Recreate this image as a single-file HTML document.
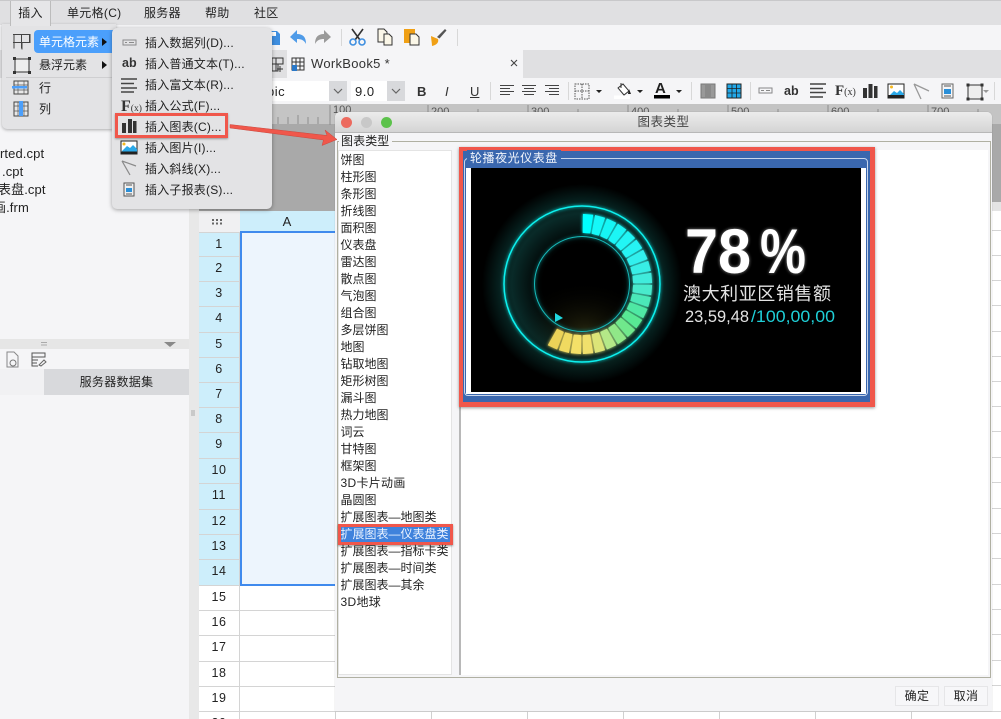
<!DOCTYPE html>
<html lang="zh"><head><meta charset="utf-8"><title>图表类型</title>
<style>
*{box-sizing:border-box}
html{margin:0;padding:0;width:1001px;height:719px;overflow:hidden}
body{margin:0;padding:0;width:1001px;height:719px;overflow:hidden;position:relative;background:#f5f5f7;font:12px/17px "Liberation Sans","Noto Sans CJK SC",sans-serif;color:#222}
.a,.t{position:absolute}
.t{white-space:nowrap}
.m{font-size:12px;line-height:18px;letter-spacing:.2px;color:#222}
.r{position:absolute;left:199px;width:40px;height:27px;border-top:1px solid #d4d4d4;text-align:center;font-size:12.5px;line-height:23px;letter-spacing:.6px;color:#222;background:#cdeefb}
.w{background:#fff}
.l{position:absolute;left:335.5px;width:120px;height:17px;padding-left:5px;line-height:17px;font-size:12px;color:#222;white-space:nowrap}
svg{position:absolute;overflow:visible}
</style></head><body>

<!-- top chrome -->
<div class="a" style="left:0;top:0;width:1001px;height:25px;background:#e0e0e2;border-top:1px solid #c8c8ca"></div>
<div class="a" style="left:0;top:25px;width:1001px;height:25px;background:#f5f5f7"></div>
<div class="a" style="left:0;top:50px;width:1001px;height:28px;background:#e0e0e2"></div>
<div class="a" style="left:287px;top:50px;width:236px;height:28px;background:#f5f5f7"></div>
<div class="a" style="left:0;top:78px;width:1001px;height:26px;background:#f5f5f7"></div>
<div class="t" style="left:67px;top:5px;font-size:12px;letter-spacing:.3px">单元格(C)</div>
<div class="t" style="left:144px;top:5px;letter-spacing:.3px">服务器</div>
<div class="t" style="left:205px;top:5px;letter-spacing:.3px">帮助</div>
<div class="t" style="left:254px;top:5px;letter-spacing:.3px">社区</div>

<!-- toolbar icons row 1 -->
<svg style="left:0;top:0" width="1001" height="105" viewBox="0 0 1001 105">
<path d="M268 31h9l3 3v11h-12z" fill="#3f8fe0"/><rect x="271" y="32" width="5" height="4" fill="#fff"/>
<path d="M290 37l7-7v4c6 0 9 3 9 10c-2-4-5-5-9-5v4z" fill="#4f9be8"/>
<path d="M331 37l-7-7v4c-6 0-9 3-9 10c2-4 5-5 9-5v4z" fill="#9a9a9a"/>
<rect x="341" y="29" width="1" height="17" fill="#d8d8d8"/>
<path d="M352 29l8 11M363 29l-8 11" stroke="#333" stroke-width="1.6" fill="none"/>
<circle cx="353" cy="42" r="3" fill="none" stroke="#3f8fe0" stroke-width="1.6"/><circle cx="362" cy="42" r="3" fill="none" stroke="#3f8fe0" stroke-width="1.6"/>
<path d="M378 29h6l3 3v10h-9z" fill="#fbf7e8" stroke="#333"/><path d="M384 34h5l3 3v8h-8z" fill="#fbf7e8" stroke="#333"/>
<rect x="404" y="29" width="11" height="14" fill="#f0a015"/><path d="M410 34h6l3 3v8h-9z" fill="#fbf7e8" stroke="#333"/>
<path d="M431 36l7 3c1 3-1 6-6 7c0-3-1-7-1-10z" fill="#f0a015"/><path d="M437 37l8-8 1.500 1.500-7 8z" fill="#555"/>
<rect x="457" y="29" width="1" height="17" fill="#d8d8d8"/>

<!-- tab icons -->
<path d="M272 58h11v6h-5v7h-6zM276 58v13M272 64h6M280 66v6M277 69h6" fill="none" stroke="#333"/>
<path d="M292 58h12v12h-12zM296 58v12M300 58v12M292 62h12M292 66h12" fill="none" stroke="#333"/><rect x="292" y="65" width="5" height="6" fill="#2a78c8"/>
<path d="M511 60l6 6M517 60l-6 6" stroke="#444" stroke-width="1.100"/>

<!-- format bar -->
<rect x="490" y="82" width="1" height="18" fill="#d8d8d8"/><rect x="568" y="82" width="1" height="18" fill="#d8d8d8"/><rect x="691" y="82" width="1" height="18" fill="#d8d8d8"/><rect x="750" y="82" width="1" height="18" fill="#d8d8d8"/><rect x="994" y="82" width="1" height="18" fill="#d8d8d8"/>
<path d="M500 85.500h14M500 88.500h10M500 91.500h14M500 94.500h10" stroke="#444"/><path d="M522 85.500h14M524 88.500h10M522 91.500h14M524 94.500h10" stroke="#444"/><path d="M545 85.500h14M549 88.500h10M545 91.500h14M549 94.500h10" stroke="#444"/>
<rect x="575" y="84" width="14" height="15" fill="none" stroke="#555" stroke-dasharray="1.500 1"/><path d="M582 84v15M575 91h14" stroke="#555" stroke-dasharray="1.500 1"/>
<path d="M596 90h6l-3 3z M637 90h6l-3 3z M676 90h6l-3 3z" fill="#222"/>
<path d="M618 88l5-4 6 7-5 4z" fill="#fff" stroke="#333"/><path d="M621 83v5" stroke="#333"/><path d="M629 89l2 5h-3z" fill="#222"/><rect x="614" y="95.500" width="16" height="3.500" fill="#fff"/>
<rect x="654" y="95" width="16" height="3.500" fill="#000"/>
<rect x="701" y="84" width="14" height="14" fill="#999" stroke="#777"/><rect x="705" y="85" width="6" height="12" fill="#8a8a8a"/>
<rect x="727" y="84" width="14" height="14" fill="#22a8e8" stroke="#222"/><path d="M727 88.500h14M727 93h14M732 84v14M736.500 84v14" stroke="#222" stroke-width=".8"/>
<rect x="759" y="88" width="13" height="5" fill="none" stroke="#888"/><path d="M761 90.500h3M766 90.500h4" stroke="#888"/>
<path d="M810 84h16M810 88.500h13M810 92.500h16M810 97h13" stroke="#444" stroke-width="1.500"/>
<path d="M863 88h4v10h-4zM868.500 84h4v14h-4zM874 86h3.500v12h-3.500z" fill="#333"/>
<rect x="888" y="84" width="16" height="14" fill="#fff" stroke="#222"/><path d="M889 96l5-5 3 2 3-3 4 4v2h-15z" fill="#2aa8e8"/><circle cx="891.500" cy="87" r="1.500" fill="#f5b820"/><rect x="888" y="95" width="16" height="3" fill="#222"/>
<path d="M914 84l15 7M914 84l7 15" stroke="#999" stroke-width="1.300" fill="none"/>
<rect x="942" y="84" width="11" height="14" fill="#f5f5f7" stroke="#666"/><rect x="944" y="89" width="7" height="5" fill="#2a8fd8"/><path d="M944 86h7M944 96h7" stroke="#555"/>
<rect x="968" y="85" width="14" height="14" fill="#eee" stroke="#333"/><rect x="966.500" y="83.500" width="3" height="3" fill="#333"/><rect x="980.500" y="83.500" width="3" height="3" fill="#333"/><rect x="966.500" y="97.500" width="3" height="3" fill="#333"/><rect x="980.500" y="97.500" width="3" height="3" fill="#333"/>
<path d="M983 90h6l-3 3z" fill="#999"/>
</svg>
<div class="t" style="left:311px;top:54px;font-size:13px;line-height:19px;letter-spacing:.3px;color:#333">WorkBook5 *</div>

<!-- format controls -->
<div class="a" style="left:240px;top:81px;width:91px;height:20px;background:#fff"></div>
<div class="a" style="left:329px;top:81px;width:18px;height:20px;background:#d8d9dc"></div>
<div class="a" style="left:351px;top:81px;width:37px;height:20px;background:#fff"></div>
<div class="a" style="left:387px;top:81px;width:18px;height:20px;background:#d8d9dc"></div>
<svg style="left:0;top:0" width="420" height="105"><path d="M334 89l4 4 4-4M392 89l4 4 4-4" fill="none" stroke="#666" stroke-width="1.200"/></svg>
<div class="t" style="left:267px;top:83px;font-size:13px;letter-spacing:.5px">bic</div>
<div class="t" style="left:355px;top:83px;font-size:13px;letter-spacing:.5px">9.0</div>
<div class="t" style="left:417px;top:83px;font-size:13px;font-weight:bold;color:#333">B</div>
<div class="t" style="left:445px;top:83px;font-size:13px;font-style:italic;color:#333">I</div>
<div class="t" style="left:470px;top:83px;font-size:13px;text-decoration:underline;color:#333">U</div>
<div class="t" style="left:655px;top:80px;font-size:15px;font-weight:bold;color:#222">A</div>
<div class="t" style="left:784px;top:83px;font-size:12.500px;font-weight:bold;color:#333">ab</div>
<div class="t" style="left:835px;top:83px;font-size:15px;font-weight:bold;font-family:'Liberation Serif',serif;color:#333">F<span style="font-size:10px;font-weight:normal">(x)</span></div>

<!-- ruler and gray area -->
<div class="a" style="left:199px;top:104px;width:802px;height:20px;background:#c4c4c4"></div>
<div class="a" style="left:199px;top:124px;width:802px;height:87px;background:#a9a9a9"></div>
<div class="a" style="left:992px;top:202px;width:9px;height:9px;background:#e4e4e4"></div>
<svg style="left:0;top:0" width="1001" height="125"><path d="M330 105v20M278 117v7M288 117v7M298 115v9M308 117v7M318 117v7M428 105v7M528 105v7M628 105v7M728 105v7M828 105v7M928 105v7M478 109v3M578 109v3M678 109v3M778 109v3M878 109v3M978 109v3" stroke="#8e8e8e"/></svg>
<div class="t" style="left:333px;top:104px;font-size:11px;line-height:12px;color:#555">100</div>
<div class="t" style="left:431px;top:106px;font-size:11px;line-height:12px;color:#555">200</div>
<div class="t" style="left:531px;top:106px;font-size:11px;line-height:12px;color:#555">300</div>
<div class="t" style="left:631px;top:106px;font-size:11px;line-height:12px;color:#555">400</div>
<div class="t" style="left:731px;top:106px;font-size:11px;line-height:12px;color:#555">500</div>
<div class="t" style="left:831px;top:106px;font-size:11px;line-height:12px;color:#555">600</div>
<div class="t" style="left:931px;top:106px;font-size:11px;line-height:12px;color:#555">700</div>

<!-- left panel -->
<div class="a" style="left:0;top:128px;width:189px;height:591px;background:#f5f5f7"></div>
<div class="a" style="left:189px;top:104px;width:10px;height:615px;background:#e8e8e8"></div>
<div class="t" style="left:0;top:145px;font-size:13px;letter-spacing:.1px">rted.cpt</div>
<div class="t" style="left:2px;top:163px;font-size:13px;letter-spacing:.1px">.cpt</div>
<div class="t" style="left:-2px;top:181px;font-size:13px;letter-spacing:.1px">表盘.cpt</div>
<div class="t" style="left:-7px;top:199px;font-size:13px;letter-spacing:.1px">画.frm</div>
<div class="a" style="left:0;top:339px;width:189px;height:10px;background:#e6e6e6"></div>
<svg style="left:0;top:339px" width="199" height="80"><path d="M164 3h12l-6 5z" fill="#888"/><path d="M41 3.500h6M41 6h6" stroke="#aaa"/><path d="M7 13h7l4 4v11H7z" fill="none" stroke="#888"/><circle cx="13" cy="24" r="3" fill="none" stroke="#777"/><path d="M32 14h13v4h-13zM32 14v13h6M32 21h6M32 24h5" fill="none" stroke="#555"/><path d="M39 26l5-5 2 2-5 4z" fill="none" stroke="#666"/><path d="M194 71v6M192 71v6" stroke="#aaa"/></svg>
<div class="a" style="left:0;top:369px;width:44px;height:26px;background:#f1f1f3"></div>
<div class="a" style="left:44px;top:369px;width:145px;height:26px;background:#d8d9dc;text-align:center;line-height:26px;letter-spacing:.3px;color:#222">服务器数据集</div>

<!-- sheet -->
<div class="a w" style="left:199px;top:211px;width:802px;height:508px"></div>
<div class="a" style="left:199px;top:211px;width:41px;height:21px;background:#f0f0f2"></div>
<svg style="left:199px;top:211px" width="41" height="21"><path d="M13 8h2v2h-2zM17 8h2v2h-2zM21 8h2v2h-2zM13 11.500h2v2h-2zM17 11.500h2v2h-2zM21 11.500h2v2h-2z" fill="#666"/></svg>
<div class="a" style="left:240px;top:211px;width:96px;height:21px;background:#cdeefb;text-align:center;line-height:21px;font-size:13px;padding-right:2px">A</div>
<div class="a" style="left:240px;top:231px;width:100px;height:355px;background:#edf5fd;border:2px solid #3f8aed"></div>
<div class="r" style="top:232px">1</div><div class="r" style="top:256px">2</div><div class="r" style="top:281px">3</div><div class="r" style="top:306px">4</div><div class="r" style="top:332px">5</div><div class="r" style="top:357px">6</div><div class="r" style="top:382px">7</div><div class="r" style="top:407px">8</div><div class="r" style="top:432px">9</div><div class="r" style="top:458px">10</div><div class="r" style="top:483px">11</div><div class="r" style="top:509px">12</div><div class="r" style="top:534px">13</div><div class="r" style="top:559px">14</div>
<div class="r w" style="top:585px">15</div><div class="r w" style="top:610px">16</div><div class="r w" style="top:635px">17</div><div class="r w" style="top:661px">18</div><div class="r w" style="top:686px">19</div><div class="r w" style="top:711px;height:8px;overflow:hidden">20</div>
<svg style="left:0;top:0;overflow:hidden" width="1001" height="719">
<path d="M239.500 232v487M240 610.500h96M240 635.500h96M240 661.500h96M240 686.500h96M240 711.500h761" stroke="#d4d4d4" fill="none"/>
<path d="M335.500 711v8M431.500 711v8M527.500 711v8M623.500 711v8M719.500 711v8M815.500 711v8M911.500 711v8" stroke="#d0d0d0"/>
<path d="M992 230.500h9M992 255.500h9M992 280.500h9M992 305.500h9M992 331.500h9M992 356.500h9M992 381.500h9M992 406.500h9M992 431.500h9M992 457.500h9M992 482.500h9M992 508.500h9M992 533.500h9M992 558.500h9M992 584.500h9M992 609.500h9M992 634.500h9M992 660.500h9M992 685.500h9" stroke="#d4d4d4"/>
</svg>

<!-- dialog -->
<div class="a" style="left:335px;top:112px;width:657px;height:599px;background:#f5f5f7;border-radius:5px 5px 0 0;box-shadow:0 0 1px rgba(0,0,0,.25)"></div>
<div class="a" style="left:335px;top:112px;width:657px;height:21px;background:linear-gradient(#ececec,#d4d4d4);border-radius:5px 5px 0 0;border-bottom:1px solid #b8b8b8;text-align:center;line-height:21px;font-size:12.500px;letter-spacing:.5px;color:#444">图表类型</div>
<div class="a" style="left:341px;top:117px;width:11px;height:11px;border-radius:50%;background:#ec6a5e"></div>
<div class="a" style="left:361px;top:117px;width:11px;height:11px;border-radius:50%;background:#c8c8c8"></div>
<div class="a" style="left:381px;top:117px;width:11px;height:11px;border-radius:50%;background:#5cc24b"></div>
<div class="a" style="left:337px;top:141px;width:654px;height:537px;border:1px solid #b0b0a2"></div>
<div class="t" style="left:339px;top:133px;background:#f5f5f7;padding:0 3px 0 2px;letter-spacing:.1px">图表类型</div>
<div class="a w" style="left:338px;top:150px;width:114px;height:525px;border:1px solid #e4e4e4"></div>
<div class="a w" style="left:459px;top:150px;width:529px;height:525px;border-left:2px solid #b8b8b8"></div>

<div class="l" style="top:151.500px">饼图</div><div class="l" style="top:168.500px">柱形图</div><div class="l" style="top:185.500px">条形图</div><div class="l" style="top:202.500px">折线图</div><div class="l" style="top:219.500px">面积图</div><div class="l" style="top:236.500px">仪表盘</div><div class="l" style="top:253.500px">雷达图</div><div class="l" style="top:270.500px">散点图</div><div class="l" style="top:287.500px">气泡图</div><div class="l" style="top:304.500px">组合图</div><div class="l" style="top:321.500px">多层饼图</div><div class="l" style="top:338.500px">地图</div><div class="l" style="top:355.500px">钻取地图</div><div class="l" style="top:372.500px">矩形树图</div><div class="l" style="top:389.500px">漏斗图</div><div class="l" style="top:406.500px">热力地图</div><div class="l" style="top:423.500px">词云</div><div class="l" style="top:440.500px">甘特图</div><div class="l" style="top:457.500px">框架图</div><div class="l" style="top:474.500px;letter-spacing:.3px">3D卡片动画</div><div class="l" style="top:491.500px">晶圆图</div><div class="l" style="top:508.500px">扩展图表—地图类</div>
<div class="a" style="left:338px;top:524px;width:115px;height:21px;border:3px solid #f0574b;background:#3f82dc;box-shadow:0 1px 2px rgba(0,0,0,.4)"></div>
<div class="l" style="top:526px;color:#eaf3ff">扩展图表—仪表盘类</div>
<div class="l" style="top:542.500px">扩展图表—指标卡类</div><div class="l" style="top:559.500px">扩展图表—时间类</div><div class="l" style="top:576.500px">扩展图表—其余</div><div class="l" style="top:593.500px;letter-spacing:.3px">3D地球</div>

<!-- preview -->
<div class="a" style="left:459px;top:147px;width:416px;height:260px;background:#f0574b;box-shadow:0 1px 3px rgba(0,0,0,.4)"></div>
<div class="a" style="left:463px;top:151px;width:407px;height:251px;background:#3a67ae"></div>
<div class="a" style="left:464px;top:158px;width:404px;height:238px;border:1px solid #c8d6ec;border-radius:4px"></div>
<div class="a" style="left:466px;top:168px;width:400px;height:226px;background:#fff"></div>
<div class="t" style="left:467px;top:150px;background:#3a67ae;padding:0 3px;color:#f2f6fc;letter-spacing:.55px">轮播夜光仪表盘</div>
<svg style="left:471px;top:168px;overflow:hidden" width="390" height="224" viewBox="471 168 390 224" font-family="'Liberation Sans','Noto Sans CJK SC',sans-serif">
<defs>
<radialGradient id="g" cx=".5" cy=".5" r=".5"><stop offset="0" stop-color="#000"/><stop offset=".4" stop-color="#000"/><stop offset=".7" stop-color="#092a28"/><stop offset=".82" stop-color="#062220"/><stop offset="1" stop-color="#000"/></radialGradient>
<radialGradient id="y" cx=".5" cy=".5" r=".5"><stop offset="0" stop-color="#4a4a1c" stop-opacity=".45"/><stop offset="1" stop-color="#000" stop-opacity="0"/></radialGradient>
<filter id="b" x="-30%" y="-30%" width="160%" height="160%"><feGaussianBlur stdDeviation="1.600" result="x"/><feMerge><feMergeNode in="x"/><feMergeNode in="SourceGraphic"/></feMerge></filter>
<filter id="c" x="-30%" y="-30%" width="160%" height="160%"><feGaussianBlur stdDeviation="1.500"/></filter>
<polygon id="s" points="-5.200,-70 5.200,-70 3.800,-51 -3.800,-51"/>
</defs>
<rect x="471" y="168" width="390" height="224" fill="#000"/>
<circle cx="582" cy="284" r="100" fill="url(#g)"/>
<ellipse cx="585" cy="330" rx="70" ry="50" fill="url(#y)"/>
<g transform="translate(582 284)" filter="url(#b)">
<circle r="78" fill="none" stroke="#0ff0ee" stroke-width="1.500"/>
<circle r="47.500" fill="none" stroke="#18b8b8" stroke-width="1"/>
<use href="#s" transform="rotate(5)" fill="#00ffff"/><use href="#s" transform="rotate(15)" fill="#14f8f8"/><use href="#s" transform="rotate(25)" fill="#18f5f5"/><use href="#s" transform="rotate(35)" fill="#1cf5f5"/><use href="#s" transform="rotate(45)" fill="#20f5f5"/><use href="#s" transform="rotate(55)" fill="#28f3f3"/><use href="#s" transform="rotate(65)" fill="#30f0ee"/><use href="#s" transform="rotate(75)" fill="#38eee6"/><use href="#s" transform="rotate(85)" fill="#40ecdc"/><use href="#s" transform="rotate(95)" fill="#48eacc"/><use href="#s" transform="rotate(105)" fill="#4ce8b8"/><use href="#s" transform="rotate(115)" fill="#50e8a4"/><use href="#s" transform="rotate(125)" fill="#58e894"/><use href="#s" transform="rotate(135)" fill="#70e88c"/><use href="#s" transform="rotate(145)" fill="#90e888"/><use href="#s" transform="rotate(155)" fill="#b4e888"/><use href="#s" transform="rotate(165)" fill="#dce478"/><use href="#s" transform="rotate(175)" fill="#f0e06c"/><use href="#s" transform="rotate(185)" fill="#f4e068"/><use href="#s" transform="rotate(195)" fill="#f0da60"/><use href="#s" transform="rotate(205)" fill="#ecd258"/>
</g>
<path d="M555 313l8 5-8 4z" fill="#20d8e0"/>
<g font-size="63" font-weight="bold" filter="url(#c)" fill="#bbb" opacity=".75"><text x="685" y="273" textLength="66" lengthAdjust="spacingAndGlyphs">78</text><text x="760" y="273" textLength="46" lengthAdjust="spacingAndGlyphs">%</text></g>
<g font-size="63" font-weight="bold" fill="#fff"><text x="685" y="273" textLength="66" lengthAdjust="spacingAndGlyphs">78</text><text x="760" y="273" textLength="46" lengthAdjust="spacingAndGlyphs">%</text></g>
<text x="683" y="300" font-size="18" fill="#e4e4e4" textLength="148">澳大利亚区销售额</text>
<text x="685" y="322" font-size="17" fill="#e4e4e4" textLength="64" lengthAdjust="spacingAndGlyphs">23,59,48</text>
<text x="751" y="322" font-size="17" fill="#1fd0d8" textLength="84" lengthAdjust="spacingAndGlyphs">/100,00,00</text>
</svg>

<!-- buttons -->
<div class="a" style="left:895px;top:686px;width:44px;height:20px;background:#f7f7f9;border:1px solid #e6e6e8;text-align:center;line-height:19px;letter-spacing:.4px">确定</div>
<div class="a" style="left:944px;top:686px;width:44px;height:20px;background:#f7f7f9;border:1px solid #e6e6e8;text-align:center;line-height:19px;letter-spacing:.4px">取消</div>

<!-- menus -->
<div class="a" style="left:2px;top:24px;width:114px;height:105px;background:#e3e3e5;border-radius:0 0 5px 5px;box-shadow:0 1px 3px rgba(0,0,0,.3)"></div>
<div class="a" style="left:10px;top:1px;width:41px;height:25px;background:#e6e6e8;border-left:1px solid #bcbcbc;border-right:1px solid #bcbcbc;text-align:center;line-height:25px;letter-spacing:.3px">插入</div>
<div class="a" style="left:34px;top:30px;width:80px;height:23px;background:#4b9ffb;border-radius:4px 0 0 4px"></div>
<div class="t m" style="left:39px;top:33px;color:#fff;letter-spacing:0">单元格元素</div>
<div class="t m" style="left:39px;top:56px;letter-spacing:0">悬浮元素</div>
<div class="t m" style="left:39px;top:79px">行</div>
<div class="t m" style="left:39px;top:100px">列</div>
<div class="a" style="left:6px;top:77px;width:106px;height:1px;background:#cfcfd1"></div>
<div class="a" style="left:112px;top:28px;width:160px;height:181px;background:#e3e3e5;border-radius:5px;box-shadow:0 1px 4px rgba(0,0,0,.35)"></div>
<svg style="left:0;top:0" width="340" height="215" viewBox="0 0 340 215">
<path d="M102 38l5 4-5 4z" fill="#111"/><path d="M102 61l5 4-5 4z" fill="#111"/>
<path d="M13 34.500h17v8h-8v7M14 34.500v14M21.500 34.500v14M29.500 34.500v8M13 42.500h9" fill="none" stroke="#444"/>
<rect x="15" y="59" width="14" height="13" fill="#eee" stroke="#333"/><path d="M13 57h3v3h-3zM28 57h3v3h-3zM13 71h3v3h-3zM28 71h3v3h-3z" fill="#333"/>
<rect x="14" y="81" width="14" height="13" fill="#e8e8e8" stroke="#444"/><path d="M14 85h14M14 90h14M18 81v13M24 81v13" stroke="#555" stroke-width=".7"/><rect x="12" y="86" width="15" height="2.500" fill="#4b9ffb"/>
<rect x="14" y="102" width="14" height="14" fill="#e8e8e8" stroke="#444"/><path d="M14 106h14M14 111h14M18 102v14M24 102v14" stroke="#555" stroke-width=".7"/><rect x="19" y="101" width="4" height="15" fill="#4b9ffb"/>
<rect x="123" y="40" width="13" height="5" fill="none" stroke="#8a8a8a"/><path d="M125 42.500h2M129 42.500h5" stroke="#8a8a8a"/>
<path d="M121 79h16M121 83.500h13M121 88h16M121 92h13" stroke="#444" stroke-width="1.400"/>
<path d="M122 123h4v10h-4zM128 119h4v14h-4zM133 121h3.500v12H133z" fill="#333"/>
<rect x="121" y="141" width="16" height="13" fill="#fff" stroke="#222"/><path d="M122 151l5-5 3 2 3-3 4 4v3h-15z" fill="#2aa8e8"/><circle cx="124" cy="144" r="1.500" fill="#f5b820"/><rect x="121" y="151.500" width="16" height="2.500" fill="#222"/>
<path d="M122 161l14 5M122 161l8 14" stroke="#8a8a8a" stroke-width="1.200" fill="none"/>
<rect x="124" y="183" width="10" height="13" fill="#f0f0f0" stroke="#555"/><rect x="126" y="188" width="6" height="4" fill="#2a8fd8"/><path d="M126 185h6M126 194h6" stroke="#555"/>
<text x="122" y="67" font-size="12.500" font-weight="bold" fill="#333" font-family="'Liberation Sans',sans-serif">ab</text>
<text x="121" y="111" font-size="16" font-weight="bold" fill="#333" font-family="'Liberation Serif',serif">F<tspan font-size="9.500" font-weight="normal">(x)</tspan></text>
</svg>
<div class="t m" style="left:145px;top:34px">插入数据列(D)...</div>
<div class="t m" style="left:145px;top:55px">插入普通文本(T)...</div>
<div class="t m" style="left:145px;top:76px">插入富文本(R)...</div>
<div class="t m" style="left:145px;top:97px">插入公式(F)...</div>
<div class="t m" style="left:145px;top:118px">插入图表(C)...</div>
<div class="t m" style="left:145px;top:139px">插入图片(I)...</div>
<div class="t m" style="left:145px;top:160px">插入斜线(X)...</div>
<div class="t m" style="left:145px;top:181px">插入子报表(S)...</div>
<div class="a" style="left:115px;top:113px;width:113px;height:25px;border:3px solid #f0574b;box-shadow:0 1px 2px rgba(0,0,0,.35)"></div>

<!-- arrow -->
<svg style="left:0;top:0" width="360" height="160"><path d="M230 124.500L327 135.500l-2-5.500 12 9.500-15 6 1.500-5.500L230 128z" fill="#f0574b" stroke="#c9483e" stroke-width=".5"/></svg>
</body></html>
